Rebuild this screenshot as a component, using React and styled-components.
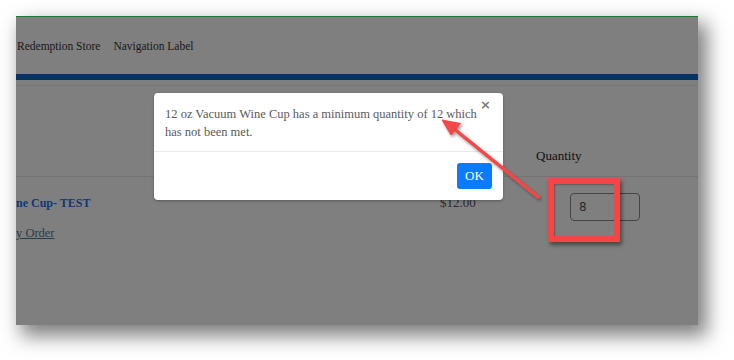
import React from "react";
import styled, { createGlobalStyle } from "styled-components";

const Global = createGlobalStyle`
  html, body { margin: 0; padding: 0; background: #ffffff; }
  body { font-family: "Liberation Serif", "DejaVu Serif", serif; }
`;

const Stage = styled.div`
  padding: 16px 0 0 16px;
  width: 734px;
  height: 360px;
  box-sizing: border-box;
`;

const Frame = styled.div`
  position: relative;
  width: 682px;
  height: 308px;
  border-top: 1px solid #1d7a2e;
  background: #ffffff;
  overflow: hidden;
  box-shadow: 7px 9px 18px 2px rgba(0, 0, 0, 0.5);
  display: flex;
  flex-direction: column;
`;

const Header = styled.header`
  height: 57px;
  display: flex;
  align-items: center;
  gap: 13px;
  padding-left: 1px;
`;

const NavLink = styled.span`
  font-size: 11.5px;
  color: #333333;
`;

const BlueBar = styled.div`
  height: 6px;
  background: #0b66cc;
`;

const Content = styled.div`
  margin-top: 5px;
  border-top: 1px solid #eeeeee;
  display: grid;
  grid-template-columns: 424px 96px 1fr;
  grid-template-rows: 91px auto;
`;

const HeadCell = styled.div`
  display: flex;
  align-items: flex-end;
  padding-bottom: 12px;
  border-bottom: 1px solid #e8e8e8;
  font-size: 13px;
  color: #262626;
`;

const Cell = styled.div`
  display: flex;
  flex-direction: column;
  align-items: flex-start;
  padding-top: ${(p) => p.$top || 0}px;
`;

const ProductName = styled.a`
  font-size: 12px;
  font-weight: 700;
  color: #1c72f0;
  line-height: 16px;
`;

const ProductLink = styled.a`
  margin-top: 14px;
  font-size: 12.5px;
  color: #4f7b98;
  text-decoration: underline;
  line-height: 16px;
`;

const Price = styled.span`
  font-size: 13px;
  color: #555555;
  line-height: 16px;
`;

const QtyInput = styled.div`
  margin-left: 34px;
  width: 70px;
  height: 28px;
  box-sizing: border-box;
  border: 1px solid #8a8a8a;
  border-radius: 4px;
  display: flex;
  align-items: center;
  padding-left: 8px;
  font-size: 12px;
  font-family: "DejaVu Sans", sans-serif;
  color: #555555;
`;

const Backdrop = styled.div`
  position: absolute;
  inset: 0;
  background: rgba(0, 0, 0, 0.5);
`;

const Modal = styled.div`
  position: absolute;
  left: 138px;
  top: 76px;
  width: 349px;
  background: #ffffff;
  border-radius: 4px;
  box-shadow: 0 1px 3px rgba(0, 0, 0, 0.3);
  font-family: "Liberation Serif", serif;
`;

const ModalBody = styled.div`
  padding: 12px 14px 10px 11px;
  font-size: 12.5px;
  line-height: 18px;
  color: #5a5a5a;
`;

const Close = styled.span`
  position: absolute;
  right: 12px;
  top: 4px;
  font-family: "DejaVu Sans", sans-serif;
  font-size: 13px;
  font-weight: 700;
  color: #7a7a7a;
`;

const ModalFooter = styled.div`
  border-top: 1px solid #e9e9e9;
  padding: 11px;
  display: flex;
  justify-content: flex-end;
`;

const OkButton = styled.button`
  width: 35px;
  height: 26px;
  border: none;
  border-radius: 3px;
  background: #0a7bff;
  color: #ffffff;
  font-family: "Liberation Serif", serif;
  font-size: 13px;
  padding: 0;
`;

const Annotation = styled.svg`
  position: absolute;
  inset: 0;
  width: 100%;
  height: 100%;
  pointer-events: none;
  overflow: visible;
`;

const HighlightBox = styled.div`
  position: absolute;
  left: 532px;
  top: 161px;
  width: 72px;
  height: 64px;
  box-sizing: border-box;
  border: 6px solid #f44646;
  box-shadow: 2px 3px 4px rgba(0, 0, 0, 0.45), inset 1px 1px 2px rgba(0, 0, 0, 0.3);
`;

export default function App() {
  return (
    <>
      <Global />
      <Stage>
        <Frame>
          <Header>
            <NavLink>Redemption Store</NavLink>
            <NavLink>Navigation Label</NavLink>
          </Header>
          <BlueBar />
          <Content>
            <HeadCell />
            <HeadCell />
            <HeadCell>Quantity</HeadCell>
            <Cell $top={18}>
              <ProductName>ne Cup- TEST</ProductName>
              <ProductLink>y Order</ProductLink>
            </Cell>
            <Cell $top={18}>
              <Price>$12.00</Price>
            </Cell>
            <Cell $top={16}>
              <QtyInput>8</QtyInput>
            </Cell>
          </Content>
          <Backdrop />
          <Modal>
            <Close>×</Close>
            <ModalBody>
              12 oz Vacuum Wine Cup has a minimum quantity of 12 which has not been met.
            </ModalBody>
            <ModalFooter>
              <OkButton>OK</OkButton>
            </ModalFooter>
          </Modal>
          <HighlightBox />
          <Annotation viewBox="0 0 682 308">
            <defs>
              <filter id="sh" x="-20%" y="-20%" width="140%" height="140%">
                <feDropShadow dx="1.5" dy="2" stdDeviation="1.5" floodColor="#000" floodOpacity="0.4" />
              </filter>
            </defs>
            <g filter="url(#sh)" fill="#f44646" stroke="#f44646">
              <line x1="522" y1="180" x2="437" y2="111" strokeWidth="3.5" strokeLinecap="round" />
              <polygon points="426,103 444.5,106.5 435,118" strokeWidth="1" strokeLinejoin="round" />
            </g>
          </Annotation>
        </Frame>
      </Stage>
    </>
  );
}
